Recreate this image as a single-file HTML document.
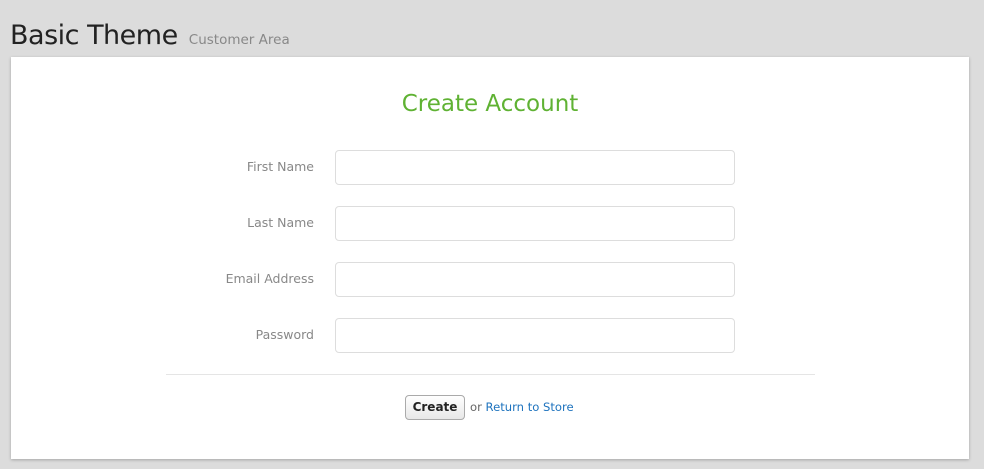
<!DOCTYPE html>
<html><head><style>
body{margin:0;background:#dcdcdc;width:984px;height:469px;font-family:"DejaVu Sans","Liberation Sans",sans-serif;position:relative;overflow:hidden}
.h{position:absolute;left:10px;top:20px;font-size:27px;color:#222;letter-spacing:-0.5px}
.h span{font-size:13.5px;color:#888;letter-spacing:0;margin-left:3px}
.box{position:absolute;left:11px;top:57px;width:958px;height:402px;background:#fff;box-shadow:0 1px 3px rgba(0,0,0,.25)}
.t{position:absolute;left:0;width:958px;top:34px;text-align:center;color:#5fb233;font-size:23px}
.l{position:absolute;right:655px;font-size:12.5px;color:#888;text-align:right}
.i{position:absolute;left:324px;width:398px;height:33px;border:1px solid #ddd;border-radius:4px}
.d{position:absolute;left:155px;width:649px;top:317px;border-top:1px solid #e5e5e5}
.b{position:absolute;left:394px;top:338px;border:1px solid #aaa;border-radius:4px;background:linear-gradient(#fff,#e8e8e8);font-size:12px;font-weight:bold;color:#222;text-align:center;line-height:22px;box-sizing:border-box;width:60px;height:25px}
.o{position:absolute;left:459px;top:343px;font-size:11.6px;color:#666}
.o a{color:#1e73be;text-decoration:none}
</style></head><body>
<div class="h">Basic Theme <span>Customer Area</span></div>
<div class="box">
<div class="t">Create Account</div>
<div class="l" style="top:102px">First Name</div><div class="i" style="top:93px"></div>
<div class="l" style="top:158px">Last Name</div><div class="i" style="top:149px"></div>
<div class="l" style="top:214px">Email Address</div><div class="i" style="top:205px"></div>
<div class="l" style="top:270px">Password</div><div class="i" style="top:261px"></div>
<div class="d"></div>
<div class="b">Create</div>
<div class="o">or <a>Return to Store</a></div>
</div>
</body></html>
